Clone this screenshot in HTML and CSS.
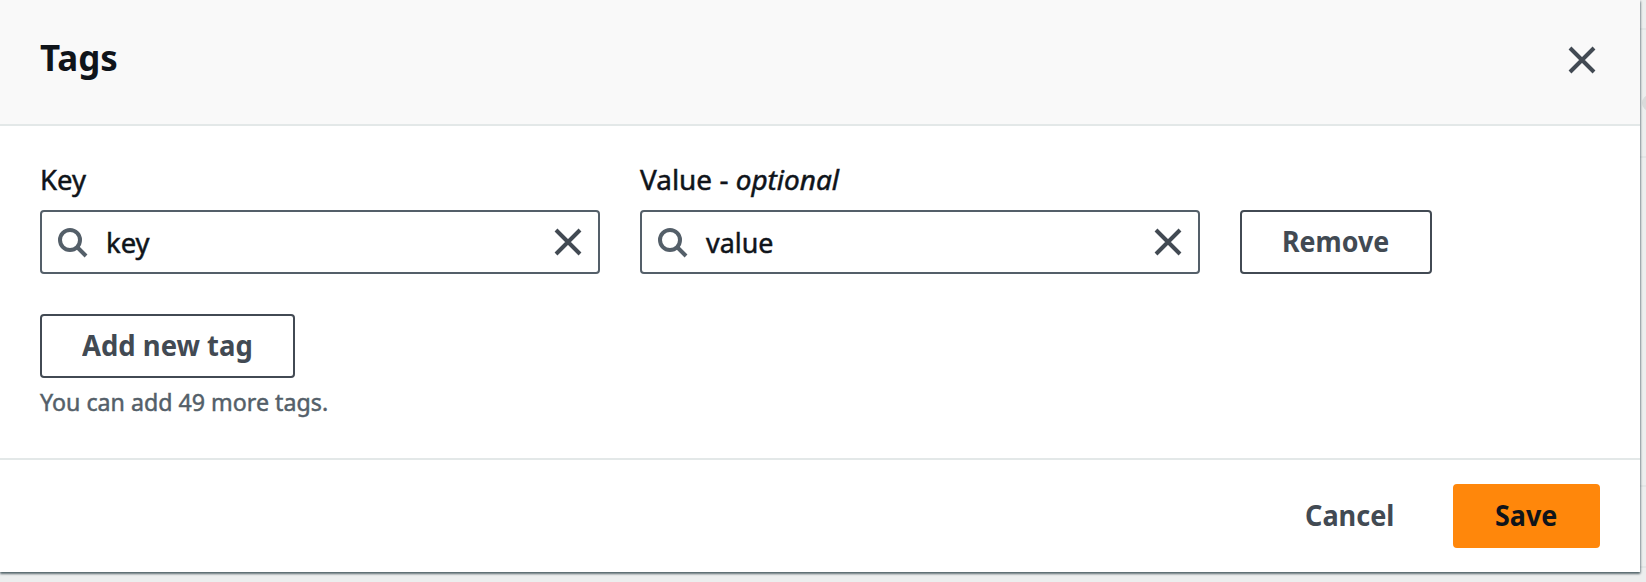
FILE: index.html
```html
<!DOCTYPE html>
<html lang="en">
<head>
<meta charset="utf-8">
<title>Tags</title>
<link rel="stylesheet" href="styles.css">
</head>
<body>
<svg class="sprite" aria-hidden="true">
  <symbol id="search" viewBox="0 0 16 16"><circle cx="7" cy="7" r="5"/><path d="m15 15-4.5-4.5"/></symbol>
  <symbol id="close" viewBox="0 0 16 16"><path d="m2 2 12 12M14 2 2 14"/></symbol>
</svg>
<div class="backdrop">
  <i class="rule rule-a"></i><i class="dot"></i><i class="rule rule-b"></i><i class="rule rule-c"></i><i class="rule rule-d"></i>
</div>
<main class="modal">
  <header class="header">
    <h1 class="title"><span class="t t-title">Tags</span></h1>
    <svg class="icon icon-close"><use href="#close"/></svg>
  </header>
  <section class="content">
    <div class="row">
      <div class="field">
        <label class="label"><span class="t t-key">Key</span></label>
        <div class="input">
          <svg class="icon icon-search"><use href="#search"/></svg>
          <span class="text"><span class="t t-inkey">key</span></span>
          <svg class="icon icon-close"><use href="#close"/></svg>
        </div>
      </div>
      <div class="field">
        <label class="label"><span class="t t-value">Value - <em>optional</em></span></label>
        <div class="input">
          <svg class="icon icon-search"><use href="#search"/></svg>
          <span class="text"><span class="t t-invalue">value</span></span>
          <svg class="icon icon-close"><use href="#close"/></svg>
        </div>
      </div>
      <button class="btn btn-remove"><span class="t t-remove">Remove</span></button>
    </div>
    <button class="btn btn-add"><span class="t t-add">Add new tag</span></button>
    <p class="hint"><span class="t t-hint">You can add 49 more tags.</span></p>
  </section>
  <footer class="footer">
    <button class="btn btn-link"><span class="t t-cancel">Cancel</span></button>
    <button class="btn btn-primary"><span class="t t-save">Save</span></button>
  </footer>
</main>
</body>
</html>
```

FILE: styles.css
```css
* { box-sizing: border-box; }
html { overflow: hidden; }
body {
  margin: 0;
  height: 582px;
  overflow: hidden;
  position: relative;
  background: #eceeee;
  color: #0f141a;
  font-family: "Noto Sans", "Open Sans", sans-serif;
  font-size: 28px;
}
.sprite { position: absolute; width: 0; height: 0; }
.backdrop { position: absolute; inset: 0; }
.rule { position: absolute; right: 0; width: 6px; height: 2px; background: #e2e6e6; }
.rule-a { top: 28px; }
.rule-b { top: 156px; }
.rule-c { top: 485px; }
.rule-d { top: 566px; }
.dot { position: absolute; left: 1642px; top: 95px; width: 16px; height: 16px; border-radius: 50%; background: #d9dbdb; }

.modal {
  position: relative;
  width: 1640px;
  height: 572px;
  background: #fff;
  display: flex;
  flex-direction: column;
  box-shadow: 0 2px 2px rgba(0, 28, 36, .55), 1px 1px 2px rgba(0, 28, 36, .25);
}
.header {
  height: 126px;
  padding: 0 42px 4px 40px;
  display: flex;
  align-items: center;
  justify-content: space-between;
  background: #f9f9f9;
  border-bottom: 2px solid #e3e8e8;
}
.title { margin: 0; padding-bottom: 4px; font-size: 36px; line-height: 44px; }
.t { display: inline-block; white-space: pre; transform-origin: 0 50%; }
.icon { width: 32px; height: 32px; flex: none; fill: none; stroke-width: 2; }
.icon-search { stroke: #545f69; }
.icon-close { stroke: #424a53; }

.content { height: 334px; padding: 33px 40px 0; border-bottom: 2px solid #e3e8e8; }
.row { display: flex; align-items: flex-end; gap: 40px; margin-bottom: 40px; }
.field { width: 560px; }
.label { display: block; height: 51px; line-height: 40px; }
.label, .text, .hint { -webkit-text-stroke: .5px currentColor; }
.input {
  display: flex;
  align-items: center;
  height: 64px;
  padding: 0 14px;
  border: 2px solid #545f69;
  border-radius: 4px;
}
.text { flex: 1; padding-left: 18px; line-height: 40px; }

.btn {
  display: flex;
  align-items: center;
  height: 64px;
  padding: 0 0 2px 40px;
  border: 2px solid #424a53;
  border-radius: 4px;
  background: #fff;
  color: #424a53;
  font: 700 28px/40px "Noto Sans", "Open Sans", sans-serif;
}
.btn-remove { width: 192px; }
.btn-add { width: 255px; }
.hint { margin: 8px 0 0; font-size: 24px; line-height: 32px; color: #545f69; }

.footer { flex: 1; display: flex; justify-content: flex-end; padding: 24px 40px 0; }
.btn-link { width: 190px; border-color: transparent; background: none; }
.btn-primary { width: 147px; background: #ff870b; border-color: #ff870b; color: #0f141a; }

.t-title { transform: scaleX(.97); }
.t-key { transform: scaleX(.98); }
.t-inkey { transform: scaleX(.98); }
.t-value { transform: scaleX(.998); }
.t-invalue { transform: scaleX(.96); }
.t-hint { transform: scaleX(.967); }
.t-remove { transform: scaleX(.957); }
.t-add { transform: scaleX(.98); }
.t-cancel { transform: scaleX(.967); }
.t-save { transform: scaleX(.96); }
```
